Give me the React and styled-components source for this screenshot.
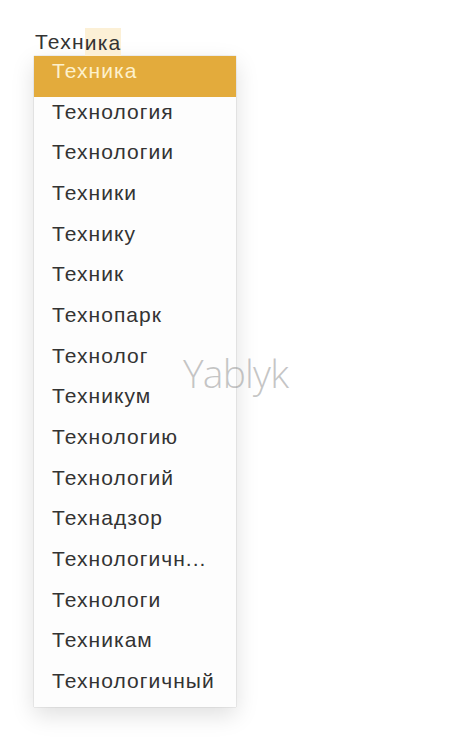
import React from "react";
import styled, { createGlobalStyle } from "styled-components";

const words = [
  "Техника",
  "Технология",
  "Технологии",
  "Техники",
  "Технику",
  "Техник",
  "Технопарк",
  "Технолог",
  "Техникум",
  "Технологию",
  "Технологий",
  "Технадзор",
  "Технологичн...",
  "Технологи",
  "Техникам",
  "Технологичный",
];

const GlobalStyle = createGlobalStyle`
  html, body {
    margin: 0;
    background: #fff;
    font-family: "Liberation Sans", Arial, sans-serif;
  }
`;

const Page = styled.div`
  position: relative;
  width: 474px;
  height: 750px;
  padding: 28px 0 0 34px;
  box-sizing: border-box;
`;

const Typed = styled.div`
  display: flex;
  align-items: center;
  height: 28px;
  font-size: 21px;
  color: #333;
  padding-left: 1px;
  letter-spacing: 1.2px;
`;

const Marked = styled.span`
  display: inline-block;
  height: 28px;
  line-height: 30px;
  background: #fcf0d6;
`;

const Menu = styled.ul`
  list-style: none;
  margin: 0;
  padding: 0;
  width: 202px;
  background: #fdfdfd;
  box-shadow: 0 0 1px rgba(0, 0, 0, 0.3), 0 8px 22px rgba(0, 0, 0, 0.13);
`;

const Item = styled.li`
  height: 40.7px;
  display: flex;
  align-items: center;
  padding: 0 0 11px 18px;
  box-sizing: border-box;
  font-size: 21px;
  letter-spacing: 1.05px;
  color: ${(p) => (p.active ? "#fdf1cc" : "#333")};
  background: ${(p) => (p.active ? "#e3ab3c" : "transparent")};
`;

const Watermark = styled.div`
  position: absolute;
  left: 183px;
  top: 346px;
  font-size: 39px;
  font-weight: 300;
  color: rgba(140, 140, 140, 0.5);
  font-family: "Open Sans", "Liberation Sans", sans-serif;
  letter-spacing: -0.8px;
`;

const App = () => {
  return (
    <Page>
      <GlobalStyle />
      <Typed>
        Техн<Marked>ика</Marked>
      </Typed>
      <Menu>
        {words.map((w, i) => (
          <Item key={i} active={i === 0}>
            {w}
          </Item>
        ))}
      </Menu>
      <Watermark>Yablyk</Watermark>
    </Page>
  );
};

export default App;
